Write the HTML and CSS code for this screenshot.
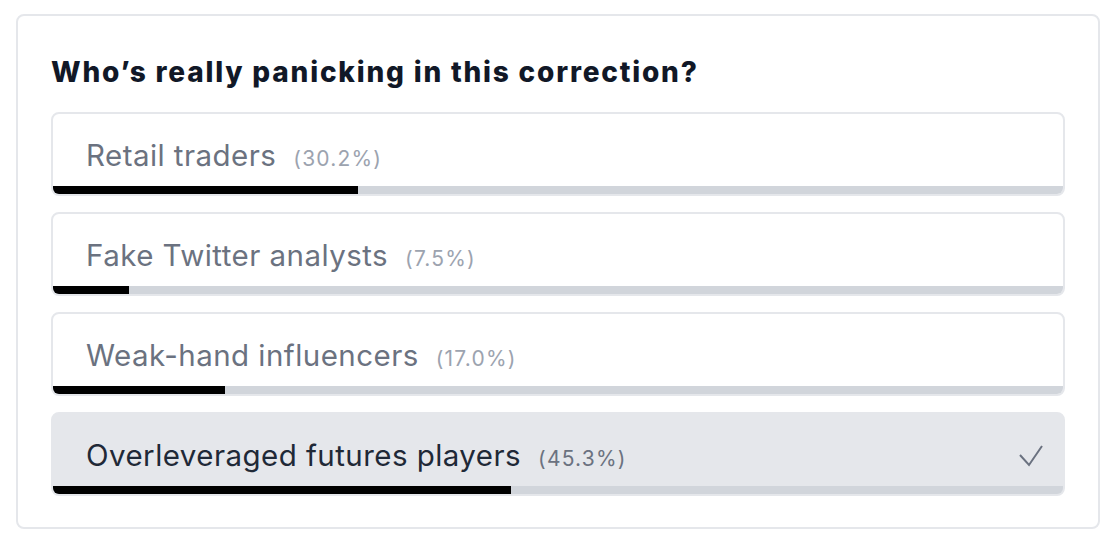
FILE: index.html
```html
<!DOCTYPE html>
<html lang="en">
<head>
<meta charset="utf-8">
<title>Poll</title>
<link rel="stylesheet" href="styles.css">
</head>
<body>
<div class="page">
  <section class="card">
    <h2 class="title">Who’s really panicking in this correction?</h2>
    <ul class="options">
      <li class="option">
        <div class="label"><span class="name">Retail traders</span><span class="pct">(30.2%)</span></div>
        <div class="track"><div class="fill" style="width:30.2%"></div></div>
      </li>
      <li class="option">
        <div class="label"><span class="name">Fake Twitter analysts</span><span class="pct">(7.5%)</span></div>
        <div class="track"><div class="fill" style="width:7.5%"></div></div>
      </li>
      <li class="option">
        <div class="label"><span class="name">Weak-hand influencers</span><span class="pct">(17.0%)</span></div>
        <div class="track"><div class="fill" style="width:17.0%"></div></div>
      </li>
      <li class="option selected">
        <div class="label"><span class="name">Overleveraged futures players</span><span class="pct">(45.3%)</span>
          <svg class="check" viewBox="0 0 24 24" width="24" height="24" aria-hidden="true"><path d="M1 11 L10 21 L23 2" fill="none" stroke="#6b7280" stroke-width="2"/></svg>
        </div>
        <div class="track"><div class="fill" style="width:45.3%"></div></div>
      </li>
    </ul>
  </section>
</div>
</body>
</html>
```
FILE: styles.css
```css
* { box-sizing: border-box; }
html, body { margin: 0; padding: 0; background: #ffffff; }
body { font-family: Inter, "Noto Sans", "Liberation Sans", sans-serif; }
.page { padding: 14px 18px 15px 16px; }
.card {
  border: 2px solid #e5e7eb;
  border-radius: 8px;
  padding: 40px 33px 31px;
  background: #fff;
}
.title {
  margin: 0 0 24px;
  font-size: 28px;
  line-height: 32px;
  font-weight: 800;
  color: #111827;
  letter-spacing: 1.8px;
}
.options { list-style: none; margin: 0; padding: 0; display: flex; flex-direction: column; gap: 16px; }
.option {
  border: 2px solid #e5e7eb;
  border-radius: 8px;
  overflow: hidden;
  background: #fff;
}
.option.selected { background: #e5e7eb; }
.label {
  display: flex;
  align-items: baseline;
  height: 72px;
  padding: 24px 20px 0 33px;
  line-height: 34px;
}
.name { font-size: 29.5px; color: #6b7280; letter-spacing: 0.45px; }
.pct { font-size: 21px; color: #9ca3af; margin-left: 17px; letter-spacing: 1.2px; }
.selected .name { color: #1f2937; }
.selected .pct { color: #6b7280; }
.check { margin-left: auto; align-self: center; margin-top: -13px; }
.track { height: 8px; background: #d1d5db; }
.fill { height: 100%; background: #000; }
```
